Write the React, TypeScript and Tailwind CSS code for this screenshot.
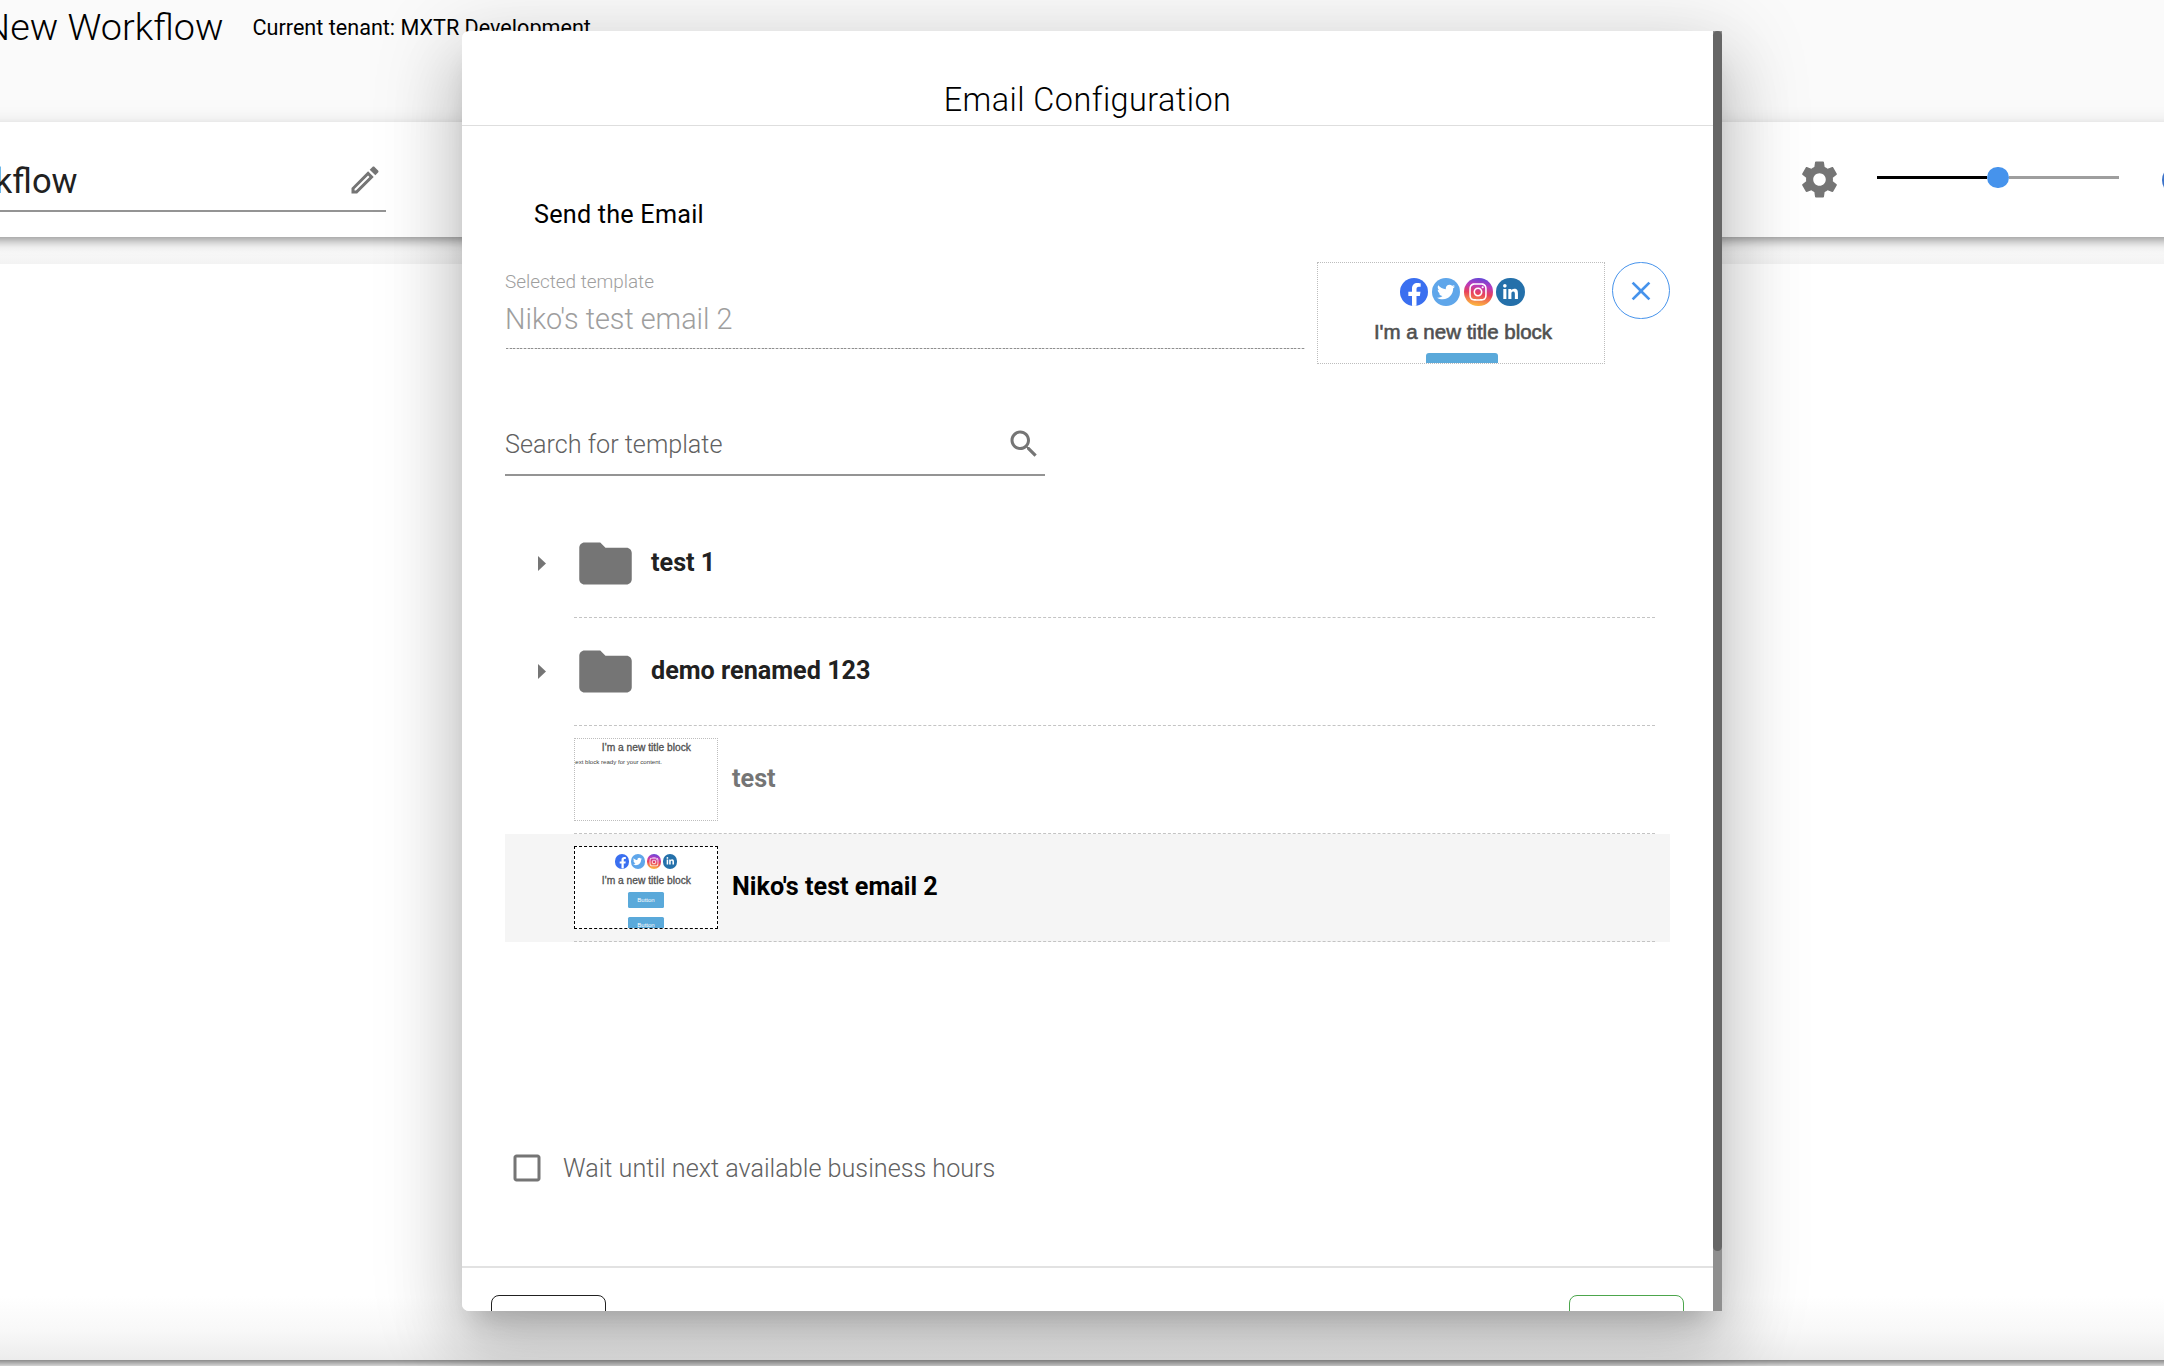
import type { ReactNode } from 'react';
import { FaFacebookF, FaInstagram, FaLinkedinIn, FaTwitter } from 'react-icons/fa';

function Icon({ d, className }: { d: string; className: string }) {
  return (
    <svg viewBox="0 0 24 24" fill="currentColor" className={`block shrink-0 ${className}`}>
      <path d={d} />
    </svg>
  );
}

const PENCIL =
  'M14.06 9.02l.92.92L5.92 19H5v-.92l9.06-9.06M17.66 3c-.25 0-.51.1-.7.29l-1.83 1.83 3.75 3.75 1.83-1.83c.39-.39.39-1.02 0-1.41l-2.34-2.34c-.2-.2-.45-.29-.71-.29zm-3.6 3.19L3 17.25V21h3.75L17.81 9.94l-3.75-3.75z';
const GEAR =
  'M19.43 12.98c.04-.32.07-.64.07-.98s-.03-.66-.07-.98l2.11-1.65c.19-.15.24-.42.12-.64l-2-3.46c-.12-.22-.39-.3-.61-.22l-2.49 1c-.52-.4-1.08-.73-1.69-.98l-.38-2.65C14.46 2.18 14.25 2 14 2h-4c-.25 0-.46.18-.49.42l-.38 2.65c-.61.25-1.17.59-1.69.98l-2.49-1c-.23-.09-.49 0-.61.22l-2 3.46c-.13.22-.07.49.12.64l2.11 1.65c-.04.32-.07.65-.07.98s.03.66.07.98l-2.11 1.65c-.19.15-.24.42-.12.64l2 3.46c.12.22.39.3.61.22l2.49-1c.52.4 1.08.73 1.69.98l.38 2.65c.03.24.24.42.49.42h4c.25 0 .46-.18.49-.42l.38-2.65c.61-.25 1.17-.59 1.69-.98l2.49 1c.23.09.49 0 .61-.22l2-3.46c.12-.22.07-.49-.12-.64l-2.11-1.65zM12 15.5c-1.93 0-3.5-1.57-3.5-3.5s1.57-3.5 3.5-3.5 3.5 1.57 3.5 3.5-1.57 3.5-3.5 3.5z';
const SEARCH =
  'M15.5 14h-.79l-.28-.27C15.41 12.59 16 11.11 16 9.5 16 5.91 13.09 3 9.5 3S3 5.91 3 9.5 5.91 16 9.5 16c1.61 0 3.09-.59 4.23-1.57l.27.28v.79l5 4.99L20.49 19l-4.99-5zm-6 0C7.01 14 5 11.99 5 9.5S7.01 5 9.5 5 14 7.01 14 9.5 11.99 14 9.5 14z';
const FOLDER =
  'M10 4H4c-1.1 0-1.99.9-1.99 2L2 18c0 1.1.9 2 2 2h16c1.1 0 2-.9 2-2V8c0-1.1-.9-2-2-2h-8l-2-2z';
const CHECKBOX =
  'M19 5v14H5V5h14m0-2H5c-1.1 0-2 .9-2 2v14c0 1.1.9 2 2 2h14c1.1 0 2-.9 2-2V5c0-1.1-.9-2-2-2z';
const CLOSE =
  'M19 6.41L17.59 5 12 10.59 6.41 5 5 6.41 10.59 12 5 17.59 6.41 19 12 13.41 17.59 19 19 17.59 13.41 12z';

function PreviewTitle() {
  return (
    <div className="pl-[0.8px] text-center text-[10.25px] leading-[12px] whitespace-nowrap text-[#505050] [-webkit-text-stroke:0.3px_#505050]">
      I'm a new title block
    </div>
  );
}

function PreviewButton() {
  return (
    <div className="mx-auto flex h-[16.4px] w-[36px] shrink-0 items-center justify-center rounded-[1.5px] bg-[#5aa9da] text-[6px] leading-none text-white">
      Button
    </div>
  );
}

/* Miniature of the newsletter: social links, a heading and two buttons */
function NewsletterPreview() {
  return (
    <div className="flex flex-col pt-[7.4px] font-['Liberation_Sans',sans-serif]">
      <div className="mb-[6.6px] flex justify-center gap-[1.8px] text-white">
        <span className="flex size-[14.3px] items-end justify-center overflow-hidden rounded-full bg-[#3a6ff0] pl-px">
          <FaFacebookF className="size-[11.5px]" />
        </span>
        <span className="flex size-[14.3px] items-center justify-center rounded-full bg-[#5fa6ea]">
          <FaTwitter className="size-[9px]" />
        </span>
        <span className="flex size-[14.3px] items-center justify-center rounded-full bg-[linear-gradient(190deg,#5b48d8_5%,#b83ac0_30%,#e8405c_55%,#fbb040_90%)]">
          <FaInstagram className="size-[10px]" />
        </span>
        <span className="flex size-[14.3px] items-center justify-center rounded-full bg-[#2470aa]">
          <FaLinkedinIn className="size-[8.5px]" />
        </span>
      </div>
      <PreviewTitle />
      <div className="mt-[4.5px] flex flex-col gap-[8.8px]">
        <PreviewButton />
        <PreviewButton />
      </div>
    </div>
  );
}

function TextPreview() {
  return (
    <div className="pt-[2.8px] font-['Liberation_Sans',sans-serif]">
      <PreviewTitle />
      <div className="mt-[4.4px] flex w-[87px] justify-end overflow-hidden text-[6.1px] leading-[8px] whitespace-nowrap text-[#444]">
        I'm a text block ready for your content.
      </div>
    </div>
  );
}

function TreeRow({ children, selected }: { children: ReactNode; selected?: boolean }) {
  return (
    <div className={`flex h-[108px] pr-[15px] pl-[69px] ${selected ? 'bg-[#f5f5f5]' : ''}`}>
      <div className="flex flex-1 items-center border-b border-dashed border-[#c4c4c4]">{children}</div>
    </div>
  );
}

function FolderRow({ name }: { name: string }) {
  return (
    <TreeRow>
      <svg viewBox="0 0 8 15" className="-ml-[36px] h-[15px] w-[8px] text-[#757575]" fill="currentColor">
        <path d="M0 0L8 7.5L0 15Z" />
      </svg>
      <Icon d={FOLDER} className="ml-[28px] size-[63px] text-[#757575]" />
      <span className="ml-[14px] pb-px text-[25.2px] font-bold text-[#212121]">{name}</span>
    </TreeRow>
  );
}

function Toolbar() {
  return (
    <div className="relative z-10 -mx-[40px] flex h-[115px] shrink-0 bg-white pl-[40px] shadow-[0_3.6px_7.2px_-1.8px_rgba(0,0,0,0.2),0_7.2px_9px_0_rgba(0,0,0,0.14),0_1.8px_18px_0_rgba(0,0,0,0.12)]">
      <div className="mt-[32px] flex h-[58px] w-[386px] shrink-0 items-start border-b-2 border-[#949494]">
        <span className="flex w-[77.5px] justify-end overflow-hidden text-[34.5px] leading-[54px] whitespace-nowrap text-[#212121]">
          New Workflow
        </span>
        <Icon d={PENCIL} className="mt-[8px] ml-[269px] size-[36px] text-[#757575]" />
      </div>
      <div className="ml-[1412px] flex h-[115px] items-center">
        <Icon d={GEAR} className="size-[43px] text-[#757575]" />
      </div>
      <div className="mt-[44.5px] ml-[36px] flex h-[22px] shrink-0 items-center">
        <div className="h-[3.6px] w-[110px] bg-black" />
        <div className="size-[21.5px] rounded-full bg-[#4693ec]" />
        <div className="h-[3.6px] w-[110px] bg-[#9e9e9e]" />
      </div>
      <div className="mt-[43px] ml-[43px] size-[30px] shrink-0 rounded-full bg-[#3b72c9]" />
    </div>
  );
}

function EmailDialog() {
  return (
    <div className="flex h-[1280px] w-[1260px] overflow-hidden rounded-l-[7px] bg-white">
      <div className="flex w-[1251px] flex-col">
        <h2 className="h-[95px] shrink-0 border-b border-[#dedede] pt-[45px] text-center text-[32.4px] leading-[48px] font-light tracking-[0.45px] text-black">
          Email Configuration
        </h2>

        <div className="flex h-[1140px] shrink-0 flex-col px-[43px]">
          <h3 className="mt-[71px] pl-[29px] text-[25.2px] leading-[36px] tracking-[0.22px] text-black">
            Send the Email
          </h3>

          <div className="mt-[29px] flex h-[102px] items-start">
            <div className="w-[800px] text-[#9e9e9e]">
              <div className="pt-[8px] text-[18.9px] leading-[24px] font-light">Selected template</div>
              <div className="pt-[7px] text-[28.8px] leading-[36px] font-light">Niko's test email 2</div>
              <div className="mt-[11px] ml-px h-px bg-[repeating-linear-gradient(90deg,#8f8f8f_0_2px,#dcdcdc_2px_3.6px)]" />
            </div>
            <div className="ml-[12px] h-[102px] w-[288px] overflow-hidden border border-dotted border-[#bdbdbd]">
              <div className="pl-[1.2px] [zoom:2]">
                <NewsletterPreview />
              </div>
            </div>
            <button className="ml-[7px] flex h-[57px] w-[58px] items-center justify-center rounded-full border border-[#4693ec] text-[#4693ec]">
              <Icon d={CLOSE} className="size-[32px]" />
            </button>
          </div>

          <div className="mt-[62px] flex h-[50px] w-[540px] items-start justify-between border-b-2 border-[#949494] pr-[3px]">
            <span className="pt-px text-[25.2px] leading-[36px] font-light text-[#616161]">Search for template</span>
            <Icon d={SEARCH} className="size-[36px] text-[#757575]" />
          </div>

          <div className="mt-[34px] w-[1165px]">
            <FolderRow name="test 1" />
            <FolderRow name="demo renamed 123" />
            <TreeRow>
              <div className="h-[83px] w-[144px] overflow-hidden border border-dotted border-[#bdbdbd] bg-white">
                <TextPreview />
              </div>
              <span className="ml-[14px] pb-[2px] text-[25.2px] font-bold text-[#757575]">test</span>
            </TreeRow>
            <TreeRow selected>
              <div className="h-[83px] w-[144px] overflow-hidden border border-dashed border-black bg-white">
                <NewsletterPreview />
              </div>
              <span className="ml-[14px] pb-[2px] text-[25.2px] font-bold text-black">Niko's test email 2</span>
            </TreeRow>
          </div>

          <label className="mt-[208px] flex items-start pl-[4px]">
            <Icon d={CHECKBOX} className="size-[36px] text-[#757575]" />
            <span className="ml-[18px] pt-px text-[25.2px] leading-[36px] font-light text-[#616161]">
              Wait until next available business hours
            </span>
          </label>
        </div>

        <div className="flex h-[45px] items-start justify-between overflow-hidden border-t-2 border-[#e2e2e2] pt-[27px] pr-[29px] pl-[29px]">
          <button className="h-[65px] w-[115px] rounded-[8px] border border-[#212121]" />
          <button className="h-[65px] w-[115px] rounded-[8px] border border-[#4ca64c]" />
        </div>
      </div>
      <div className="w-[9px] bg-[#8f8f8f]">
        <div className="h-[1220px] rounded-[4.5px] bg-[#666]" />
      </div>
    </div>
  );
}

export default function App() {
  return (
    <div className="relative flex h-[1366px] w-[2164px] flex-col overflow-hidden bg-[#fafafa] font-['Roboto',sans-serif]">
      <header className="flex h-[122px] shrink-0">
        <span className="flex w-[223.5px] justify-end overflow-hidden text-[37.8px] leading-[54px] font-light whitespace-nowrap text-black">
          New Workflow
        </span>
        <span className="ml-[29px] text-[21.6px] leading-[55px] text-black">Current tenant: MXTR Development</span>
      </header>
      <Toolbar />
      <div className="h-[27px] shrink-0 bg-[linear-gradient(to_bottom,#fafafa_40%,#f3f3f3)]" />
      <div className="flex h-[1096px] shrink-0 flex-col justify-end bg-white">
        <div className="h-[64px] bg-[linear-gradient(to_bottom,#ffffff,#f8f8f8_55%,#ececec)]" />
      </div>
      <div className="h-[6px] shrink-0 bg-[linear-gradient(to_bottom,#8c8c8c,#d4d4d4)]" />

      <div className="absolute inset-0 z-20 flex items-start pt-[31px] pl-[462px]">
        <div className="rounded-[7px] shadow-[0_19.8px_27px_-12.6px_rgba(0,0,0,0.2),0_43.2px_68.4px_5.4px_rgba(0,0,0,0.14),0_16.2px_82.8px_14.4px_rgba(0,0,0,0.12)]">
          <EmailDialog />
        </div>
      </div>
    </div>
  );
}
